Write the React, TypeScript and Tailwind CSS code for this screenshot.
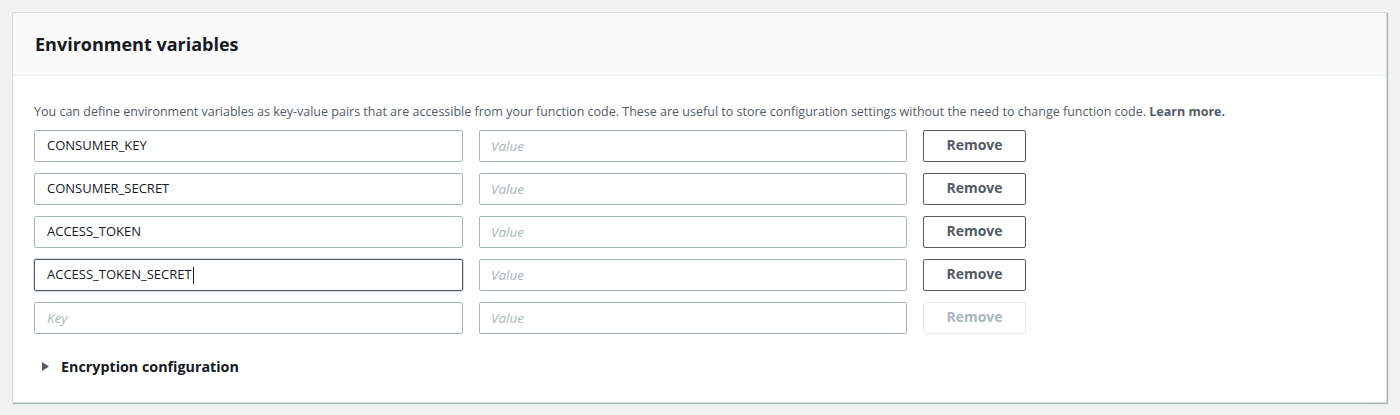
import { useState } from 'react';

const filas = [
  { chave: 'CONSUMER_KEY' },
  { chave: 'CONSUMER_SECRET' },
  { chave: 'ACCESS_TOKEN' },
  { chave: 'ACCESS_TOKEN_SECRET', foco: true },
];

export default function App() {
  const [aberto, setAberto] = useState(false);

  return (
    <div className="min-h-[415px] bg-[#f2f2f2] pt-[12px] pl-[12px] pr-[13px] font-['Open_Sans',sans-serif] text-[#16191f]">
      <div className="bg-white border border-[#d5dbdb] shadow-[1px_1px_1px_0_#aab7b8]">
        {/* Cabeçalho */}
        <div className="h-[63px] bg-[#fafafa] border-b border-[#eaeded] flex items-center pl-[22px]">
          <h2 className="text-[18px] font-bold leading-none">Environment variables</h2>
        </div>

        <div className="pl-[21px] pt-[28px] pb-[25px]">
          <p className="text-[12.5px] text-[#545b64] leading-[16px] mb-[10px]">
            You can define environment variables as key-value pairs that are accessible from your function code. These are useful to store configuration settings without the need to change function code.{' '}
            <a className="font-bold text-[#545b64]">Learn more.</a>
          </p>

          <div className="flex flex-col gap-[11px]">
            {filas.map((f) => (
              <div key={f.chave} className="flex items-center">
                <div
                  className={`w-[429px] h-[32px] rounded-[2px] border flex items-center px-[12px] text-[13px] ${
                    f.foco ? 'border-[#545b64] shadow-[0_0_0_1px_#d5dbdb]' : 'border-[#aab7b8]'
                  }`}
                >
                  {f.chave}
                  {f.foco ? <span className="inline-block w-px h-[17px] bg-[#16191f] ml-px" /> : null}
                </div>
                <div className="ml-[16px] w-[428px] h-[32px] rounded-[2px] border border-[#aab7b8] flex items-center px-[11px] text-[13.5px] italic text-[#aab7b8]">
                  Value
                </div>
                <button className="ml-[16px] w-[103px] h-[32px] rounded-[2px] border border-[#545b64] text-[14px] leading-none pb-[2px] font-bold text-[#545b64]">
                  Remove
                </button>
              </div>
            ))}
            <div className="flex items-center">
              <div className="w-[429px] h-[32px] rounded-[2px] border border-[#aab7b8] flex items-center px-[12px] text-[13.5px] italic text-[#aab7b8]">
                Key
              </div>
              <div className="ml-[16px] w-[428px] h-[32px] rounded-[2px] border border-[#aab7b8] flex items-center px-[11px] text-[13.5px] italic text-[#aab7b8]">
                Value
              </div>
              <button className="ml-[16px] w-[103px] h-[32px] rounded-[2px] border border-[#eaeded] text-[14px] leading-none pb-[2px] font-bold text-[#aab7b8]">
                Remove
              </button>
            </div>
          </div>

          {/* Configuração de criptografia */}
          <button
            onClick={() => setAberto(!aberto)}
            className="mt-[22px] flex items-center gap-[12px] pl-[8px] text-[14.3px] font-bold text-[#16191f]"
          >
            <svg width="7" height="9" viewBox="0 0 7 9" className={aberto ? 'rotate-90' : ''}>
              <path d="M0 0 L7 4.5 L0 9 Z" fill="#545b64" />
            </svg>
            Encryption configuration
          </button>
        </div>
      </div>
    </div>
  );
}
